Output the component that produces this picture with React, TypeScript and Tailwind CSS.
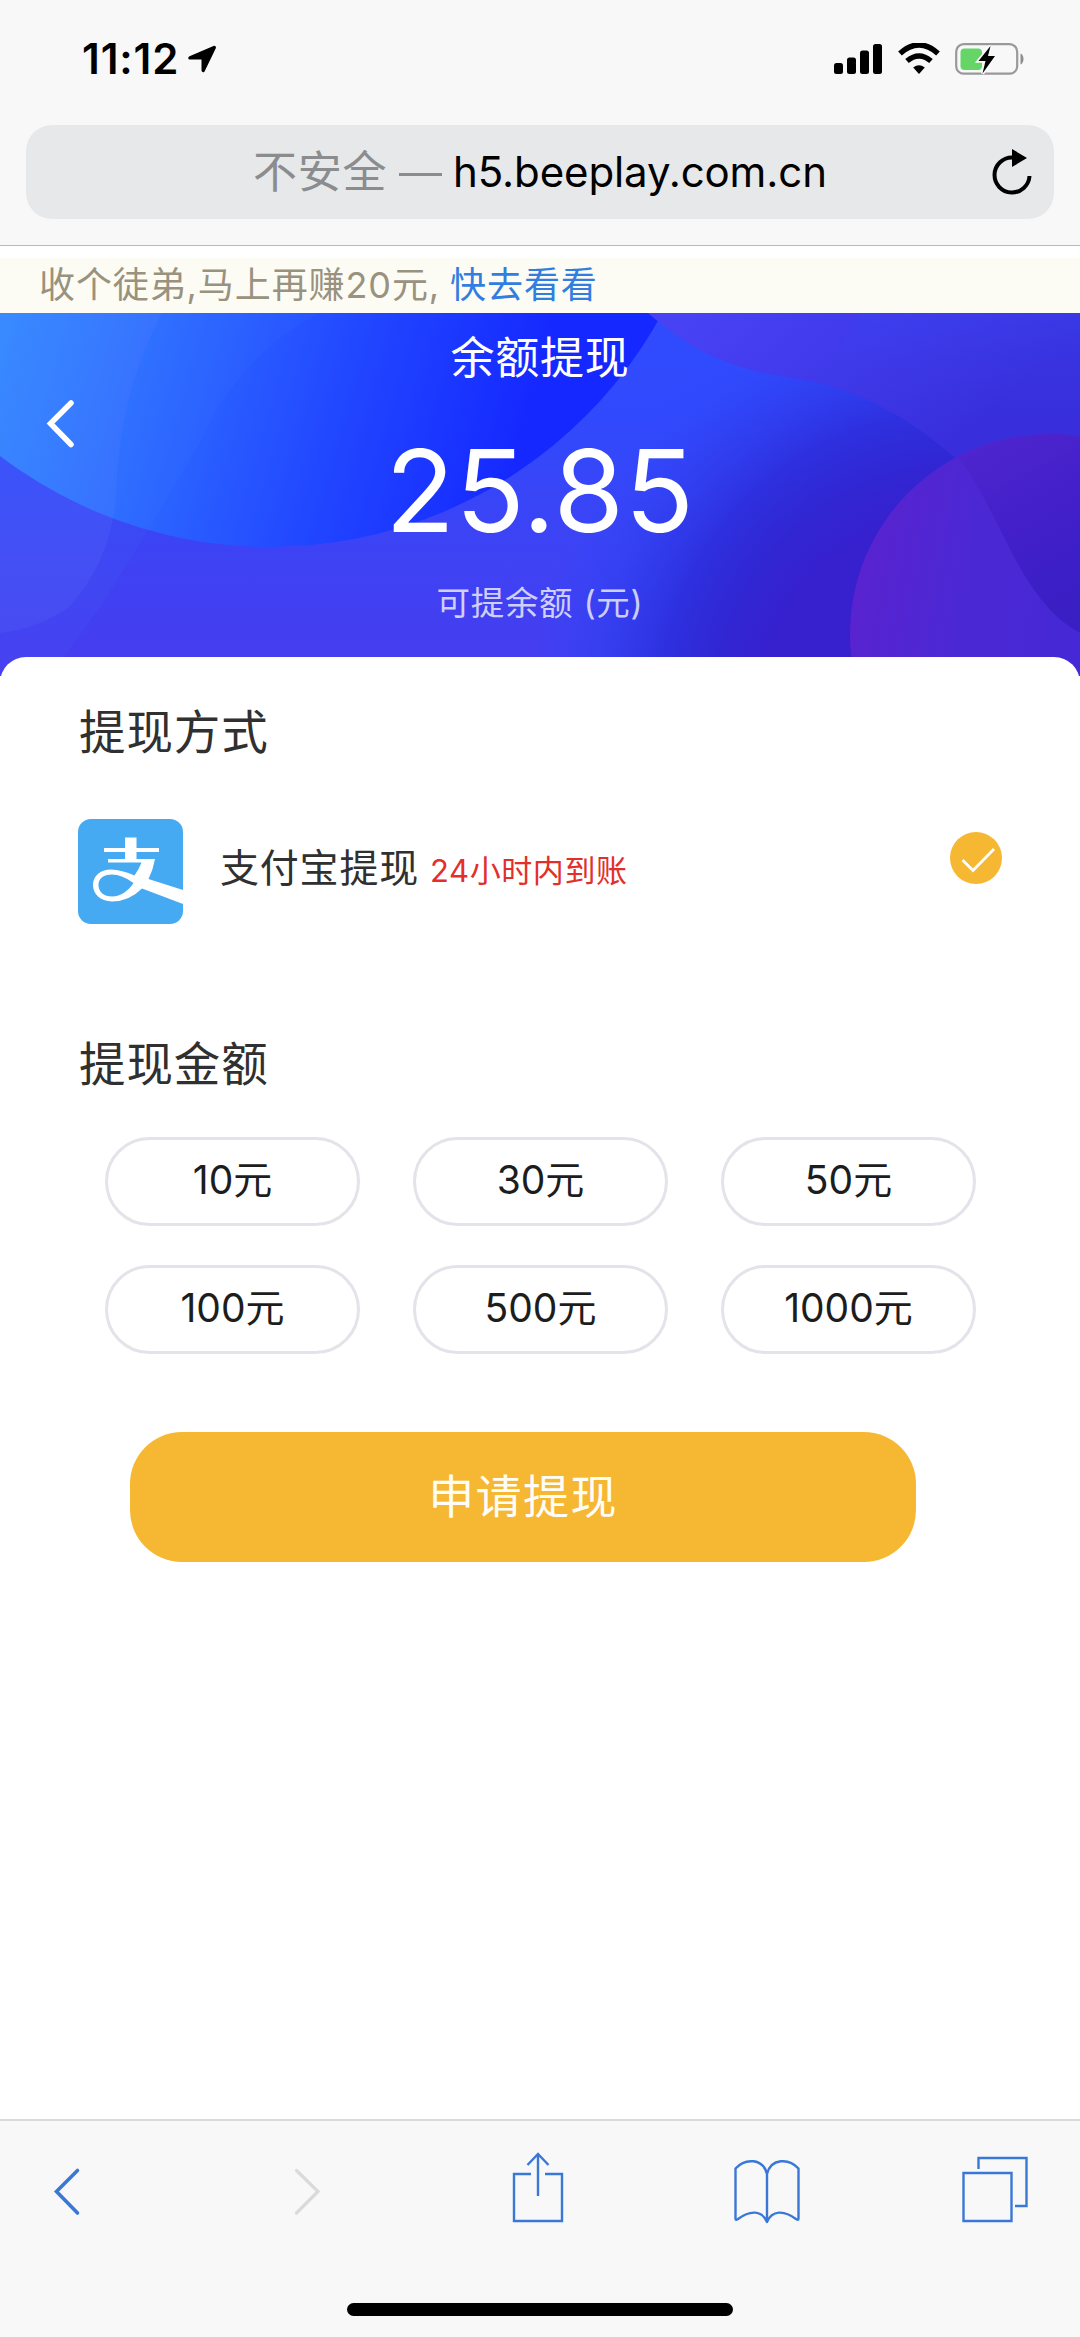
import type { ReactNode } from 'react';

const amounts = ['10元', '30元', '50元', '100元', '500元', '1000元'];

function StatusBar() {
  return (
    <div className="flex h-[125px] items-start justify-between pl-[82px] pr-[55px] pt-[43px]">
      <div className="flex items-center gap-[8px]">
        <span className="h-[32px] w-[98px] whitespace-nowrap text-[42px] font-semibold leading-[32px] tracking-[0.900px]">
          11:12
        </span>
        <svg width="28" height="28" viewBox="0 0 28 28">
          <path
            d="M25.5 1 1.500 11.200c-2 1-1.400 3.400.8 3.400H13.500v10.500c0 2.500 2.500 2.800 3.300.9L27.800 3.200c.6-1.400-.7-2.800-2.300-2.200z"
            fill="#000"
          />
        </svg>
      </div>
      <div className="flex items-center">
        <svg width="48" height="32" viewBox="0 0 48 32">
          <rect x="0" y="20" width="9" height="11" rx="2.500" />
          <rect x="13" y="14.500" width="9" height="16.500" rx="2.500" />
          <rect x="26" y="7.500" width="9" height="23.500" rx="2.500" />
          <rect x="39" y="1" width="9" height="30" rx="2.500" />
        </svg>
        <svg className="ml-[16px]" width="42" height="32" viewBox="0 0 42 32">
          <path d="M2 10.500Q21-6.500 40 10.500" fill="none" stroke="#000" strokeWidth="5.500" />
          <path d="M9 18Q21 8 33 18" fill="none" stroke="#000" strokeWidth="5.500" />
          <path d="M15.200 24.500Q21 20 26.800 24.500L21 31z" />
        </svg>
        <svg className="ml-[15px]" width="70" height="32" viewBox="0 0 70 32">
          <rect x="1.200" y="1.200" width="61" height="29.500" rx="7.500" fill="none" stroke="#999" strokeWidth="2.200" />
          <path d="M65.500 10.500c4 1.500 4 9.500 0 11z" fill="#8e8e90" />
          <rect x="5.500" y="5.500" width="21.500" height="21.500" rx="4" fill="#65d567" />
          <path
            d="M35.500 3 23.500 18h7l-3 12.500L40 13h-7z"
            fill="#000"
            stroke="#f8f8f8"
            strokeWidth="3.500"
            paintOrder="stroke"
          />
        </svg>
      </div>
    </div>
  );
}

function AddressBar() {
  return (
    <div className="mx-[26px] flex h-[94px] items-center rounded-[26px] bg-[#e6e8ea] pl-[227px] pr-[22px]">
      <div className="flex flex-1 items-center whitespace-nowrap leading-[60px]">
        <span className="w-[132px] text-[44px] tracking-[0.700px] text-[#8b8c8e]">不安全</span>
        <span className="ml-[14px] mt-[4px] h-[3px] w-[43px] bg-[#8b8c8e]" />
        <span className="ml-[11px] text-[42px] tracking-[-0.100px] text-black">h5.beeplay.com.cn</span>
      </div>
      <svg width="40" height="46" viewBox="0 0 40 46">
        <path d="M20 8.500A17.500 17.500 0 1 0 37.500 27" fill="none" stroke="#000" strokeWidth="4" />
        <path d="M20 0 35 9 20 18z" />
      </svg>
    </div>
  );
}

function HeroBackground() {
  return (
    <svg className="absolute inset-0 h-full w-full" viewBox="0 0 1080 363" preserveAspectRatio="none">
      <defs>
        <linearGradient id="base" x1="0" y1="0" x2="0" y2="1">
          <stop offset="0" stopColor="#304cfe" />
          <stop offset="0.300" stopColor="#3149fc" />
          <stop offset="0.650" stopColor="#3d43f4" />
          <stop offset="1" stopColor="#473cef" />
        </linearGradient>
        <linearGradient id="sky" gradientUnits="userSpaceOnUse" x1="0" y1="0" x2="520" y2="150">
          <stop offset="0" stopColor="#318bff" />
          <stop offset="0.300" stopColor="#2e6cff" />
          <stop offset="0.620" stopColor="#234aff" />
          <stop offset="1" stopColor="#1528ff" />
        </linearGradient>
        <radialGradient id="wave" gradientUnits="userSpaceOnUse" cx="960" cy="400" r="430">
          <stop offset="0.450" stopColor="#3720ce" />
          <stop offset="0.580" stopColor="#3126d3" />
          <stop offset="0.700" stopColor="#2e30df" />
          <stop offset="0.840" stopColor="#2f3eef" stopOpacity="0.700" />
          <stop offset="1" stopColor="#3048fd" stopOpacity="0" />
        </radialGradient>
        <linearGradient id="corner" gradientUnits="userSpaceOnUse" x1="700" y1="0" x2="900" y2="220">
          <stop offset="0" stopColor="#4842f5" />
          <stop offset="0.450" stopColor="#4039ea" />
          <stop offset="0.900" stopColor="#382edb" />
          <stop offset="1" stopColor="#382edb" />
        </linearGradient>
        <linearGradient id="cornerTop" gradientUnits="userSpaceOnUse" x1="0" y1="0" x2="0" y2="130">
          <stop offset="0" stopColor="#3a42f0" />
          <stop offset="1" stopColor="#3a36e0" stopOpacity="0" />
        </linearGradient>
        <linearGradient id="orb" gradientUnits="userSpaceOnUse" x1="850" y1="240" x2="1080" y2="280">
          <stop offset="0" stopColor="#5a22cf" />
          <stop offset="0.500" stopColor="#4b28d4" />
          <stop offset="1" stopColor="#4728d6" />
        </linearGradient>
        <linearGradient id="orbDark" gradientUnits="userSpaceOnUse" x1="960" y1="120" x2="1060" y2="300">
          <stop offset="0" stopColor="#5026cf" />
          <stop offset="0.600" stopColor="#411fc9" />
          <stop offset="1" stopColor="#3a1fc5" />
        </linearGradient>
        <clipPath id="orbClip">
          <circle cx="1050" cy="321" r="200" />
        </clipPath>
      </defs>
      <rect width="1080" height="363" fill="url(#base)" />
      <rect width="1080" height="363" fill="url(#wave)" />
      <circle cx="270" cy="-212" r="446" fill="url(#sky)" />
      <path d="M0 0H162Q124 70 117 160Q118 240 69 294Q40 315 0 320Z" fill="#6a8cff" opacity="0.130" />
      <path d="M0 0H320Q240 40 200 130Q151 213 103 290L50 363H0Z" fill="#4a90ff" opacity="0.070" />
      <path
        d="M648 0C700 45 740 58 800 66C870 78 925 118 954 144C1000 190 1015 285 1080 320V0Z"
        fill="url(#corner)"
      />
      <path
        d="M860 0H1080V130H940C920 110 880 85 820 70Z"
        fill="url(#cornerTop)"
        opacity="0.500"
      />
      <circle cx="1050" cy="321" r="200" fill="url(#orb)" />
      <path
        d="M950 135C1000 190 1015 285 1080 320V0H950Z"
        fill="url(#orbDark)"
        clipPath="url(#orbClip)"
      />
    </svg>
  );
}

function Hero() {
  return (
    <section className="relative h-[363px] text-white">
      <HeroBackground />
      <div className="relative flex h-full flex-col items-center whitespace-nowrap">
        <h1 className="mt-[15px] text-[44px] leading-[60px] tracking-[0.700px]">余额提现</h1>
        <div className="mt-[46px] text-[114px] leading-[114px] tracking-[0.700px]">25.85</div>
        <p className="mt-[33px] text-[33.500px] leading-[44px] tracking-[0.700px] text-white/75">可提余额 (元)</p>
      </div>
      <svg className="absolute left-[46px] top-[86px]" width="30" height="50" viewBox="0 0 30 50">
        <path d="M25 4 4.500 24.500 25 45.500" fill="none" stroke="#fff" strokeWidth="5.500" strokeLinecap="round" />
      </svg>
    </section>
  );
}

function AlipayLogo() {
  return (
    <svg width="105" height="105" viewBox="0 0 105 105">
      <rect width="105" height="105" rx="13" fill="#45aaf2" />
      <path
        d="M47 18.500H58.500V29H81V33H58.500V40H77Q75 51 70.500 60L105 71V85L64 69.500Q51 82.500 34 82.500C22 82 15 75 15 66C15 57 22 50.500 33 50.500Q44 51 56.500 56.500Q61 50 63.500 43.500H30V40H47V33H26V29H47ZM34 55.500C25 55.500 20.500 60 20.500 66C20.500 73 26 77.500 34 77.500C43 77.500 50 72 55.500 64Q44 55.500 34 55.500Z"
        fill="#fff"
        fillRule="evenodd"
      />
    </svg>
  );
}

function SectionTitle({ children }: { children: ReactNode }) {
  return (
    <h2 className="pl-[79px] text-[46.500px] leading-[60px] tracking-[0.900px] text-[#303030]">{children}</h2>
  );
}

function WithdrawPanel() {
  return (
    <main className="relative -mt-[19px] flex-1 rounded-t-[26px] bg-white pt-[45px]">
      <SectionTitle>提现方式</SectionTitle>
      <div className="mt-[57px] flex h-[105px] items-center pl-[78px] pr-[78px]">
        <AlipayLogo />
        <span className="mb-[7px] ml-[37px] whitespace-nowrap text-[39px] leading-[50px] tracking-[0.800px] text-[#303030]">
          支付宝提现
        </span>
        <span className="mb-[2px] ml-[11px] whitespace-nowrap text-[31px] leading-[44px] tracking-[0.600px] text-[#e22f2c]">
          24小时内到账
        </span>
        <svg className="mb-[27px] ml-auto" width="52" height="52" viewBox="0 0 52 52">
          <circle cx="26" cy="26" r="26" fill="#f6b733" />
          <path d="M12.500 28 23 38.500 44 17" fill="none" stroke="#fff" strokeWidth="2.800" />
        </svg>
      </div>
      <div className="mt-[110px]">
        <SectionTitle>提现金额</SectionTitle>
      </div>
      <div className="ml-[105px] mt-[43px] grid w-[871px] grid-cols-3 gap-x-[53px] gap-y-[39px]">
        {amounts.map((amount) => (
          <button
            key={amount}
            className="flex h-[89px] items-center justify-center rounded-full border-[3px] border-[#e3e3ea] pb-[3px] text-[39px] leading-[50px] text-[#1d1d1d]"
          >
            {amount}
          </button>
        ))}
      </div>
      <button className="ml-[130px] mt-[78px] flex h-[130px] w-[786px] items-center justify-center rounded-[52px] bg-[#f6b733] pb-[3px] text-[46px] leading-[60px] tracking-[1.400px] text-[#fffdf5]">
        申请提现
      </button>
    </main>
  );
}

function BottomToolbar() {
  return (
    <footer className="flex h-[218px] flex-col items-center justify-between border-t-2 border-[#d9dbdb] bg-[#f8f8f8] pb-[21px] pt-[30px]">
      <div className="flex h-[76px] w-full items-start pl-[52px] text-[#3a78d8]">
        <svg width="30" height="76" viewBox="0 0 30 76">
          <path d="M25.500 19.500 4.500 40.500 25.500 62" fill="none" stroke="currentColor" strokeWidth="3.600" strokeLinecap="round" />
        </svg>
        <svg className="ml-[210px]" width="30" height="76" viewBox="0 0 30 76">
          <path d="M4.500 19.500 26 40.500 4.500 62" fill="none" stroke="#dadada" strokeWidth="3.200" strokeLinecap="round" />
        </svg>
        <svg className="ml-[190px]" width="52" height="76" viewBox="0 0 52 76" fill="none" stroke="currentColor" strokeWidth="2.400">
          <path d="M19 23H2V70H50V23H33M26 3V45M15.500 14 26 3 36.500 14" />
        </svg>
        <svg className="ml-[170px]" width="66" height="76" viewBox="0 0 66 76" fill="none" stroke="currentColor" strokeWidth="2.400">
          <path
            d="M33 23C29 7 11 7 1.500 17.500V67.500C1.500 69.500 2.500 69 4 68C16 59 28 59 33 71C38 59 50 59 62 68C63.500 69 64.500 69.500 64.500 67.500V17.500C55 7 37 7 33 23ZM33 23V71"
            strokeLinejoin="round"
          />
        </svg>
        <svg className="ml-[161px]" width="67" height="76" viewBox="0 0 67 76" fill="none" stroke="currentColor" strokeWidth="2.400">
          <path d="M2.500 22H50.500V70H2.500ZM17.500 18V7H65.500V55H54" />
        </svg>
      </div>
      <div className="h-[13px] w-[386px] rounded-full bg-black" />
    </footer>
  );
}

export default function App() {
  return (
    <div className="flex h-[2337px] w-[1080px] flex-col overflow-hidden bg-white font-['Inter','Noto_Sans_CJK_SC',sans-serif]">
      <header className="h-[246px] border-b border-[#b8b9bb] bg-[#f8f8f8]">
        <StatusBar />
        <AddressBar />
      </header>
      <div className="mt-[12px] flex h-[55px] items-center whitespace-nowrap bg-[#fdfcf4] pb-[2px] pl-[39px] text-[36px] leading-[50px] tracking-[0.900px] text-[#98927f]">
        收个徒弟,马上再赚20元,
        <a className="ml-[10px] text-[#327ee0]">快去看看</a>
      </div>
      <Hero />
      <WithdrawPanel />
      <BottomToolbar />
    </div>
  );
}
